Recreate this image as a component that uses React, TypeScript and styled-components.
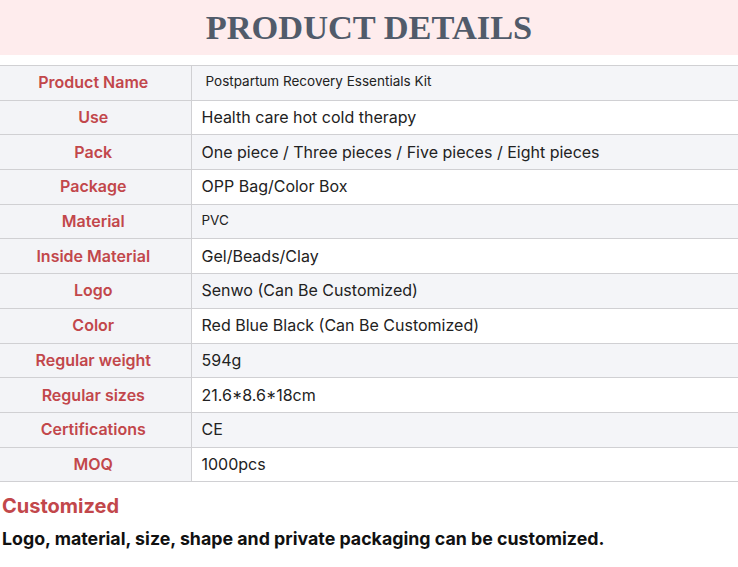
import React from "react";
import styled, { createGlobalStyle } from "styled-components";

const Global = createGlobalStyle`
  html, body { margin: 0; padding: 0; background: #ffffff; }
  body { font-family: Inter, "Noto Sans", sans-serif; color: #222; }
`;

const Page = styled.div`
  width: 738px;
  display: flex;
  flex-direction: column;
`;

const Banner = styled.div`
  height: 55px;
  background: #feeced;
  display: flex;
  align-items: center;
  justify-content: center;
`;

const Title = styled.h1`
  margin: 0;
  font-family: "Liberation Serif", "Times New Roman", serif;
  font-weight: 700;
  font-size: 34.4px;
  color: #515b6a;
  letter-spacing: 0;
`;

const Table = styled.table`
  margin-top: 10px;
  width: 100%;
  border-collapse: collapse;
  table-layout: fixed;
  border-top: 1px solid #d0d0d3;
`;

const Row = styled.tr<{ $alt: boolean }>`
  height: 34.7px;
  background: ${(p) => (p.$alt ? "#f4f5f8" : "#ffffff")};
  border-bottom: 1px solid #d0d0d3;
`;

const Label = styled.td`
  box-sizing: border-box;
  width: 191px;
  background: #f3f4f7;
  border-right: 1px solid #d0d0d3;
  text-align: center;
  font-weight: 600;
  font-size: 16px;
  color: #c2474b;
  padding: 0 4px 1px 0;
`;

const Value = styled.td<{ $small?: boolean; $indent?: number }>`
  padding: 0 0 ${(p) => (p.$small ? "4px" : "1px")} ${(p) => p.$indent ?? 10}px;
  font-size: ${(p) => (p.$small ? "13.5px" : "16px")};
  color: #222;
  vertical-align: middle;
`;

const Footer = styled.div`
  padding: 12px 2px 0 2px;
  display: flex;
  flex-direction: column;
  gap: 10px;
`;

const SubTitle = styled.h2`
  margin: 0;
  font-size: 20px;
  font-weight: 700;
  color: #c2474b;
`;

const Note = styled.p`
  margin: 0;
  font-size: 17.8px;
  font-weight: 700;
  color: #111;
`;

const rows: { label: string; value: string; small?: boolean; indent?: number }[] = [
  { label: "Product Name", value: "Postpartum Recovery Essentials Kit", small: true, indent: 14 },
  { label: "Use", value: "Health care hot cold therapy" },
  { label: "Pack", value: "One piece / Three pieces / Five pieces / Eight pieces" },
  { label: "Package", value: "OPP Bag/Color Box" },
  { label: "Material", value: "PVC", small: true },
  { label: "Inside Material", value: "Gel/Beads/Clay" },
  { label: "Logo", value: "Senwo (Can Be Customized)" },
  { label: "Color", value: "Red Blue Black (Can Be Customized)" },
  { label: "Regular weight", value: "594g" },
  { label: "Regular sizes", value: "21.6*8.6*18cm" },
  { label: "Certifications", value: "CE" },
  { label: "MOQ", value: "1000pcs" },
];

export default function App() {
  return (
    <Page>
      <Global />
      <Banner>
        <Title>PRODUCT DETAILS</Title>
      </Banner>
      <Table>
        <tbody>
          {rows.map((r, i) => (
            <Row key={r.label} $alt={i % 2 === 0}>
              <Label>{r.label}</Label>
              <Value $small={r.small} $indent={r.indent}>
                {r.value}
              </Value>
            </Row>
          ))}
        </tbody>
      </Table>
      <Footer>
        <SubTitle>Customized</SubTitle>
        <Note>Logo, material, size, shape and private packaging can be customized.</Note>
      </Footer>
    </Page>
  );
}
